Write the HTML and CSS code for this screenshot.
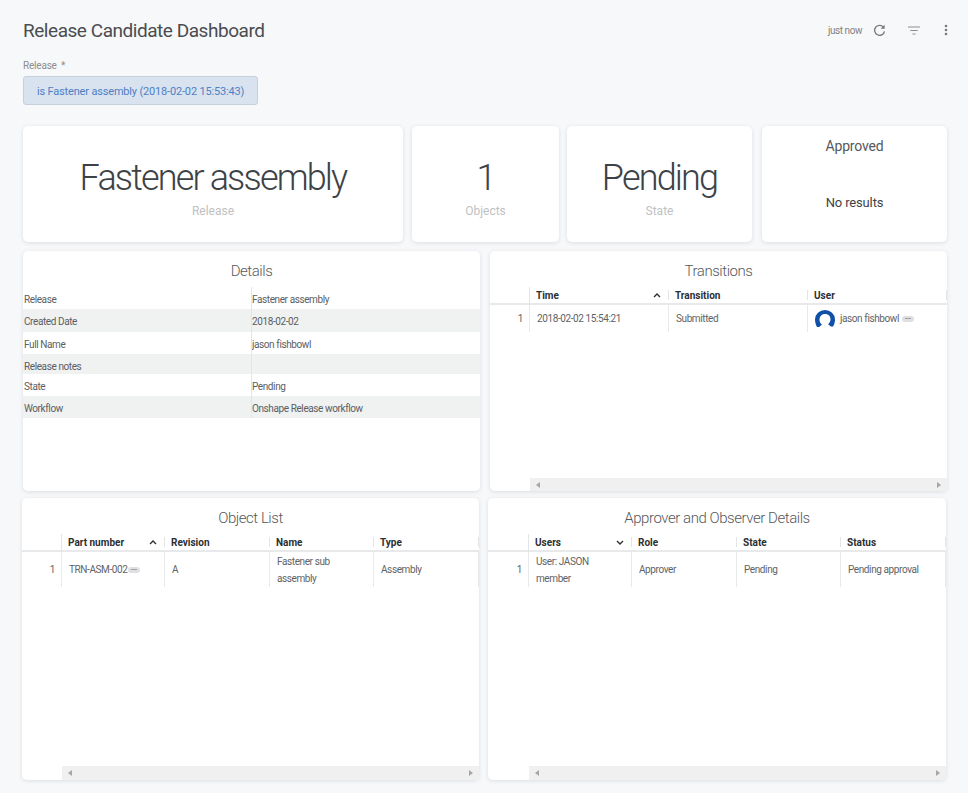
FILE: index.html
```html
<!DOCTYPE html>
<html lang="en">
<head>
<meta charset="utf-8">
<title>Release Candidate Dashboard</title>
<link rel="stylesheet" href="styles.css">
</head>
<body>
<header class="top">
  <h1 class="title">Release Candidate Dashboard</h1>
  <div class="tools">
    <span class="ago">just now</span>
    <svg class="refresh" width="13" height="13" viewBox="0 0 13 13"><path d="M10.800 3.600A5 5 0 1 0 11.500 7.300" fill="none" stroke="#77797c" stroke-width="1.300"/><path d="M11.600 .8v4h-4z" fill="#77797c"/></svg>
    <svg class="filter" width="12" height="9" viewBox="0 0 12 9"><path d="M0 1h12M2.300 4.500h7.400M4.500 8h3" fill="none" stroke="#8b8d90" stroke-width="1.200"/></svg>
    <svg class="kebab" width="4" height="12" viewBox="0 0 4 12"><circle cx="2" cy="2" r="1.300" fill="#77797c"/><circle cx="2" cy="6" r="1.300" fill="#77797c"/><circle cx="2" cy="10" r="1.300" fill="#77797c"/></svg>
  </div>
</header>
<div class="param">
  <div class="param-label">Release *</div>
  <div class="param-value">is Fastener assembly (2018-02-02 15:53:43)</div>
</div>

<section class="row stats">
  <div class="card stat"><div class="big">Fastener assembly</div><div class="cap">Release</div></div>
  <div class="card stat"><div class="big">1</div><div class="cap">Objects</div></div>
  <div class="card stat shifted"><div class="big">Pending</div><div class="cap">State</div></div>
  <div class="card approved"><div class="approved-title">Approved</div><div class="none">No results</div></div>
</section>

<section class="row mid">
  <div class="card panel">
    <h2 class="panel-title">Details</h2>
    <div class="kv">
      <div class="kv-row"><span class="k">Release</span><span class="v">Fastener assembly</span></div>
      <div class="kv-row alt"><span class="k">Created Date</span><span class="v">2018-02-02</span></div>
      <div class="kv-row"><span class="k">Full Name</span><span class="v">jason fishbowl</span></div>
      <div class="kv-row alt short"><span class="k">Release notes</span><span class="v"></span></div>
      <div class="kv-row"><span class="k">State</span><span class="v">Pending</span></div>
      <div class="kv-row alt"><span class="k">Workflow</span><span class="v">Onshape Release workflow</span></div>
    </div>
  </div>
  <div class="card panel">
    <h2 class="panel-title">Transitions</h2>
    <div class="tbl cols-t">
      <div class="th idx"></div>
      <div class="th"><span>Time</span><svg class="sort" width="8" height="5" viewBox="0 0 8 5"><path d="M1 4l3-3 3 3" fill="none" stroke="#2c2f33" stroke-width="1.400"/></svg></div>
      <div class="th"><span>Transition</span></div>
      <div class="th"><span>User</span></div>
      <div class="td idx">1</div>
      <div class="td">2018-02-02 15:54:21</div>
      <div class="td">Submitted</div>
      <div class="td user">
        <svg class="avatar" width="20" height="17" viewBox="0 0 20 17"><path d="M10 0A10 9.500 0 0 1 20 9.500c0 2.500-.7 5-1.800 6.800-.8.7-2.200.3-3-.3-.6-.8-1.400-1.400-2.200-1.800 1.600-1.200 2.500-3 2.500-5 0-3-2-5.200-5.500-5.200S4.500 6.700 4.500 9.700c0 2 .9 3.800 2.500 5-.8.4-1.600 1-2.200 1.800-.8.6-2.200 1-3 .3C.7 14.500 0 12 0 9.500A10 9.500 0 0 1 10 0z" fill="#0f4fa8"/></svg>
        <span>jason fishbowl</span><span class="chip"></span>
      </div>
    </div>
    <div class="scroll"><i class="arrow left"></i><i class="arrow right"></i></div>
  </div>
</section>

<section class="row low">
  <div class="card panel">
    <h2 class="panel-title">Object List</h2>
    <div class="tbl cols-o">
      <div class="th idx"></div>
      <div class="th"><span>Part number</span><svg class="sort" width="8" height="5" viewBox="0 0 8 5"><path d="M1 4l3-3 3 3" fill="none" stroke="#2c2f33" stroke-width="1.400"/></svg></div>
      <div class="th"><span>Revision</span></div>
      <div class="th"><span>Name</span></div>
      <div class="th"><span>Type</span></div>
      <div class="td idx tall">1</div>
      <div class="td tall">TRN-ASM-002<span class="chip tight"></span></div>
      <div class="td tall">A</div>
      <div class="td tall">Fastener sub assembly</div>
      <div class="td tall">Assembly</div>
    </div>
    <div class="scroll tall-bar"><i class="arrow left"></i><i class="arrow right"></i></div>
  </div>
  <div class="card panel">
    <h2 class="panel-title">Approver and Observer Details</h2>
    <div class="tbl cols-a">
      <div class="th idx"></div>
      <div class="th"><span>Users</span><svg class="sort" width="8" height="5" viewBox="0 0 8 5"><path d="M1 1l3 3 3-3" fill="none" stroke="#2c2f33" stroke-width="1.400"/></svg></div>
      <div class="th"><span>Role</span></div>
      <div class="th"><span>State</span></div>
      <div class="th"><span>Status</span></div>
      <div class="td idx tall">1</div>
      <div class="td tall">User: JASON member</div>
      <div class="td tall">Approver</div>
      <div class="td tall">Pending</div>
      <div class="td tall">Pending approval</div>
    </div>
    <div class="scroll tall-bar wide-idx"><i class="arrow left"></i><i class="arrow right"></i></div>
  </div>
</section>
</body>
</html>
```
FILE: styles.css
```css
* { box-sizing: border-box; }
html, body { margin: 0; height: 793px; overflow: hidden; }
body {
  background: #f7f8fa;
  padding: 0 21px 0 23px;
  font-family: Roboto, "Liberation Sans", sans-serif;
  color: #55585c;
}
.top { display: flex; justify-content: space-between; align-items: center; height: 60px; }
.title { margin: 0; font-size: 19px; font-weight: 400; color: #4a4d50; letter-spacing: -.46px; }
.tools { display: flex; align-items: center; margin-right: -1px; }
.ago { font-size: 10px; color: #808285; margin-right: 11px; letter-spacing: -.45px; }
.refresh { margin-right: 22px; }
.filter { margin-right: 24px; }
.param { height: 66px; }
.param-label { font-size: 10px; color: #8b8d90; height: 16px; line-height: 12px; letter-spacing: -.2px; word-spacing: 2px; }
.param-value {
  width: 235px; height: 29px; line-height: 29px;
  background: #d9e3f0; border: 1px solid #c6d0dd; border-radius: 3px;
  padding-left: 13px; font-size: 11px; color: #4e7fc4; letter-spacing: -.17px;
}
.row { display: grid; }
.stats { grid-template-columns: 380px 147px 185px 185px; column-gap: 9px; height: 116px; margin-bottom: 9px; }
.shifted { margin: 0 1px 0 -1px; }
.mid { grid-template-columns: 457px 457px; column-gap: 10px; height: 240px; margin-bottom: 7px; }
.low { grid-template-columns: 457px 458px; column-gap: 9px; height: 282px; margin-left: -1px; }
.card { background: #fff; border-radius: 5px; box-shadow: 0 1px 4px rgba(60, 64, 80, .14); min-width: 0; }
.stat { display: flex; flex-direction: column; align-items: center; padding-top: 30px; }
.big { font-size: 36px; line-height: 44px; font-weight: 300; color: #3d4246; letter-spacing: -1.85px; }
.cap { font-size: 12px; line-height: 16px; margin-top: 3px; color: #bfc1c3; }
.approved { text-align: center; }
.approved-title { font-size: 14px; line-height: 20px; margin-top: 10px; color: #55585c; letter-spacing: -.2px; }
.none { font-size: 13px; line-height: 18px; margin-top: 38px; color: #3f4347; letter-spacing: -.15px; }
.panel { display: flex; flex-direction: column; overflow: hidden; }
.panel-title { margin: 0; height: 36px; line-height: 40px; text-align: center; font-size: 15px; font-weight: 300; color: #55585c; letter-spacing: -.45px; }
.kv { font-size: 10px; color: #5b5e62; letter-spacing: -.4px; }
.kv-row { display: grid; grid-template-columns: 229px 1fr; grid-template-rows: minmax(0, 1fr); height: 22.3px; line-height: 26px; }
.kv-row.short { height: 20px; }
.kv-row.alt { background: #f0f1f1; }
.k { padding-left: 1px; border-right: 1px solid #e3e4e6; min-height: 0; overflow: hidden; }
.v { min-height: 0; overflow: hidden; }
.tbl { display: grid; font-size: 10px; color: #606366; }
.cols-t { grid-template-columns: 40px 139px 139px 139px; }
.cols-o { grid-template-columns: 40px 103px 105px 104px 105px; }
.cols-a { grid-template-columns: 41px 103px 105px 104px 105px; }
.th {
  height: 18px; display: flex; justify-content: space-between; align-items: center;
  padding: 1px 8px 0 6px; border-bottom: 2px solid #e8e9ea;
  font-weight: 700; color: #2c2f33;
  position: relative;
}
.th::after { content: ""; position: absolute; right: 0; top: 3px; height: 10px; border-right: 1px solid #e3e4e6; }
.th.idx::after { top: 0; height: 18px; }
.td {
  height: 27px; display: flex; align-items: center; padding: 0 6px 0 7px;
  border-right: 1px solid #e8e9ea; letter-spacing: -.4px;
}
.td.tall { height: 35px; line-height: 17px; }
.td.idx { justify-content: flex-end; padding-right: 6px; color: #606366; }
.user { border-right: 0; }
.avatar { margin-right: 5px; flex: none; }
.chip {
  width: 12px; height: 6px; border-radius: 3px; background: #e0e0e3; margin-left: 3px; flex: none;
  display: flex; align-items: center; justify-content: center;
}
.chip::after { content: ""; width: 6px; height: 1px; background: #a0a1a5; }
.chip.tight { margin-left: 1px; }
.scroll { margin-top: auto; margin-left: 40px; height: 13px; background: #f0f0f0; display: flex; justify-content: space-between; align-items: center; padding: 0 6px; }
.tall-bar { height: 14px; padding-bottom: 1px; }
.wide-idx { margin-left: 41px; }
.arrow { width: 0; height: 0; border-top: 3px solid transparent; border-bottom: 3px solid transparent; }
.arrow.left { border-right: 4px solid #a5a6a8; }
.arrow.right { border-left: 4px solid #a5a6a8; }
```
